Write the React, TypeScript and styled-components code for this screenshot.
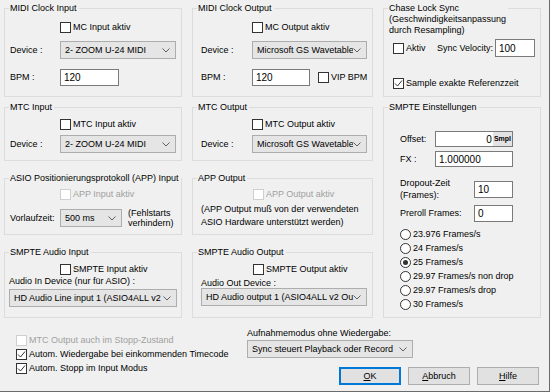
import React from 'react';
import styled, { createGlobalStyle } from 'styled-components';

const Global = createGlobalStyle`
  html, body { margin: 0; padding: 0; background: #f0f0f0; }
  body { font-family: "Liberation Sans", Arial, sans-serif; font-size: 9px; color: #000; }
  * { box-sizing: border-box; }
`;

const Dialog = styled.div`
  width: 550px;
  height: 392px;
  background: #f0f0f0;
  border-right: 1px solid #6b6b6b;
  border-bottom: 1px solid #6b6b6b;
  display: flex;
  flex-direction: column;
  font-family: "Liberation Sans", Arial, sans-serif;
  font-size: 9px;
  line-height: 11px;
  color: #000;
  overflow: hidden;
`;

const MainGrid = styled.div`
  display: grid;
  grid-template-columns: 178px 181px 158px;
  grid-template-rows: 89px 10px 54px 17px 57px 17px 66px;
  column-gap: 10px;
  padding: 8px 0 0 4px;
`;

const Group = styled.div<{ $col: number; $row: string }>`
  grid-column: ${(p) => p.$col};
  grid-row: ${(p) => p.$row};
  position: relative;
  border: 1px solid #dcdcdc;
  display: flex;
  flex-direction: column;
`;

const Legend = styled.div`
  position: absolute;
  top: -6px;
  left: 4px;
  padding: 0 2px 0 1px;
  background: #f0f0f0;
  line-height: 11px;
  white-space: nowrap;
`;

const Row = styled.div<{ $mt?: number; $pl?: number }>`
  display: flex;
  align-items: center;
  margin-top: ${(p) => p.$mt ?? 0}px;
  padding-left: ${(p) => p.$pl ?? 0}px;
  white-space: nowrap;
`;

const Label = styled.span<{ $w: number }>`
  width: ${(p) => p.$w}px;
  flex: none;
`;

const Note = styled.div<{ $mt?: number; $pl?: number; $lh?: number; $ml?: number }>`
  margin-top: ${(p) => p.$mt ?? 0}px;
  margin-left: ${(p) => p.$ml ?? 0}px;
  padding-left: ${(p) => p.$pl ?? 0}px;
  line-height: ${(p) => p.$lh ?? 11}px;
  white-space: nowrap;
`;

const CheckLabel = styled.label<{ $disabled?: boolean; $w?: number }>`
  display: inline-flex;
  align-items: center;
  gap: 2px;
  color: ${(p) => (p.$disabled ? '#a0a0a0' : '#000')};
  width: ${(p) => (p.$w ? `${p.$w}px` : 'auto')};
  flex: none;
  white-space: nowrap;
`;

const CheckBox = styled.span<{ $disabled?: boolean }>`
  width: 11px;
  height: 11px;
  flex: none;
  border: 1px solid ${(p) => (p.$disabled ? '#cfcfcf' : '#333333')};
  background: #fff;
  display: inline-flex;
  align-items: center;
  justify-content: center;
`;

const RadioCircle = styled.span`
  width: 11px;
  height: 11px;
  flex: none;
  border: 1px solid #333;
  border-radius: 50%;
  background: #fff;
  display: inline-flex;
  align-items: center;
  justify-content: center;
`;

const RadioDot = styled.span`
  width: 5px;
  height: 5px;
  border-radius: 50%;
  background: #333;
`;

const RadioRow = styled.label`
  display: flex;
  align-items: center;
  gap: 2px;
  height: 14px;
  white-space: nowrap;
`;

const RadioList = styled.div<{ $mt: number; $pl: number }>`
  display: flex;
  flex-direction: column;
  margin-top: ${(p) => p.$mt}px;
  padding-left: ${(p) => p.$pl}px;
`;

const ComboBox = styled.div<{ $w: number; $ml?: number }>`
  width: ${(p) => p.$w}px;
  height: 18px;
  margin-left: ${(p) => p.$ml ?? 0}px;
  flex: none;
  border: 1px solid #adadad;
  background: #e5e5e5;
  display: flex;
  align-items: center;
  padding-left: 4px;
  padding-right: 5px;
`;

const ComboText = styled.span`
  flex: 1;
  min-width: 0;
  overflow: hidden;
  white-space: nowrap;
`;

const Input = styled.div<{ $w: number; $h?: number; $right?: boolean }>`
  width: ${(p) => p.$w}px;
  height: ${(p) => p.$h ?? 17}px;
  flex: none;
  border: 1px solid #7a7a7a;
  background: #fff;
  display: flex;
  align-items: center;
  justify-content: ${(p) => (p.$right ? 'flex-end' : 'flex-start')};
  padding-left: 3px;
  font-size: 10px;
`;

const Unit = styled.span`
  height: 14px;
  margin-left: 1px;
  padding: 0 1px;
  background: #e3e3e3;
  font-size: 7px;
  font-weight: bold;
  line-height: 14px;
`;

const Bottom = styled.div`
  display: grid;
  grid-template-columns: 247px 1fr;
`;

const BottomChecks = styled.div`
  display: flex;
  flex-direction: column;
  padding: 15px 0 0 16px;
`;

const CheckLine = styled.div`
  height: 14px;
  display: flex;
  align-items: center;
`;

const BottomRight = styled.div`
  display: flex;
  flex-direction: column;
  padding: 10px 10px 0 0;
`;

const Buttons = styled.div`
  display: flex;
  justify-content: flex-end;
  gap: 7px;
  margin-top: 9px;
`;

const Button = styled.button<{ $default?: boolean }>`
  width: 62px;
  height: 18px;
  padding: 0;
  background: #e1e1e1;
  border: 1px solid ${(p) => (p.$default ? '#0078d7' : '#adadad')};
  box-shadow: ${(p) => (p.$default ? 'inset 0 0 0 1px #0078d7' : 'none')};
  font-family: "Liberation Sans", Arial, sans-serif;
  font-size: 9px;
  color: #000;
`;

function Chevron() {
  return (
    <svg width="8" height="5" viewBox="0 0 8 5" style={{ flex: 'none' }}>
      <polyline points="0.5,0.5 4,4 7.5,0.5" fill="none" stroke="#606060" strokeWidth="1" />
    </svg>
  );
}

function Combo({ text, w, ml }: { text: string; w: number; ml?: number }) {
  return (
    <ComboBox $w={w} $ml={ml}>
      <ComboText>{text}</ComboText>
      <Chevron />
    </ComboBox>
  );
}

function Check({ label, checked, disabled, w }: { label: string; checked?: boolean; disabled?: boolean; w?: number }) {
  return (
    <CheckLabel $disabled={disabled} $w={w}>
      <CheckBox $disabled={disabled}>
        {checked && (
          <svg width="9" height="9" viewBox="0 0 9 9">
            <polyline points="1,4.5 3.5,7 8,1.5" fill="none" stroke="#333" strokeWidth="1" />
          </svg>
        )}
      </CheckBox>
      {label}
    </CheckLabel>
  );
}

function Radio({ label, checked }: { label: string; checked?: boolean }) {
  return (
    <RadioRow>
      <RadioCircle>{checked && <RadioDot />}</RadioCircle>
      {label}
    </RadioRow>
  );
}

const frames = [
  '23.976 Frames/s',
  '24 Frames/s',
  '25 Frames/s',
  '29.97 Frames/s non drop',
  '29.97 Frames/s drop',
  '30 Frames/s',
];

export default function App() {
  return (
    <>
      <Global />
      <Dialog>
        <MainGrid>
          <Group $col={1} $row="1">
            <Legend>MIDI Clock Input</Legend>
            <Row $mt={13} $pl={55}>
              <Check label="MC Input aktiv" />
            </Row>
            <Row $mt={8} $pl={5}>
              <Label $w={50}>Device :</Label>
              <Combo text="2- ZOOM U-24 MIDI" w={116} />
            </Row>
            <Row $mt={10} $pl={5}>
              <Label $w={50}>BPM :</Label>
              <Input $w={59}>120</Input>
            </Row>
          </Group>

          <Group $col={1} $row="3">
            <Legend>MTC Input</Legend>
            <Row $mt={11} $pl={55}>
              <Check label="MTC Input aktiv" />
            </Row>
            <Row $mt={5} $pl={5}>
              <Label $w={50}>Device :</Label>
              <Combo text="2- ZOOM U-24 MIDI" w={116} />
            </Row>
          </Group>

          <Group $col={1} $row="5">
            <Legend>ASIO Positionierungsprotokoll (APP) Input</Legend>
            <Row $mt={10} $pl={55}>
              <Check label="APP Input aktiv" disabled />
            </Row>
            <Row $mt={8} $pl={5}>
              <Label $w={50}>Vorlaufzeit:</Label>
              <Combo text="500 ms" w={62} />
              <Note $ml={6} $lh={10}>
                (Fehlstarts
                <br />
                verhindern)
              </Note>
            </Row>
          </Group>

          <Group $col={1} $row="7">
            <Legend>SMPTE Audio Input</Legend>
            <Row $mt={11} $pl={55}>
              <Check label="SMPTE Input aktiv" />
            </Row>
            <Note $mt={1} $pl={4}>Audio In Device (nur für ASIO) :</Note>
            <Row $mt={2}>
              <Combo text="HD Audio Line input 1 (ASIO4ALL v2 Output)" w={168} ml={4} />
            </Row>
          </Group>

          <Group $col={2} $row="1">
            <Legend>MIDI Clock Output</Legend>
            <Row $mt={13} $pl={59}>
              <Check label="MC Output aktiv" />
            </Row>
            <Row $mt={8} $pl={8}>
              <Label $w={51}>Device :</Label>
              <Combo text="Microsoft GS Wavetable Synth" w={115} />
            </Row>
            <Row $mt={10} $pl={8}>
              <Label $w={51}>BPM :</Label>
              <Input $w={58}>120</Input>
              <Row $pl={8}>
                <Check label="VIP BPM" />
              </Row>
            </Row>
          </Group>

          <Group $col={2} $row="3">
            <Legend>MTC Output</Legend>
            <Row $mt={11} $pl={59}>
              <Check label="MTC Output aktiv" />
            </Row>
            <Row $mt={5} $pl={8}>
              <Label $w={51}>Device :</Label>
              <Combo text="Microsoft GS Wavetable Synth" w={115} />
            </Row>
          </Group>

          <Group $col={2} $row="5">
            <Legend>APP Output</Legend>
            <Row $mt={10} $pl={60}>
              <Check label="APP Output aktiv" disabled />
            </Row>
            <Note $mt={3} $pl={8} $lh={13}>
              (APP Output muß von der verwendeten
              <br />
              ASIO Hardware unterstützt werden)
            </Note>
          </Group>

          <Group $col={2} $row="7">
            <Legend>SMPTE Audio Output</Legend>
            <Row $mt={11} $pl={60}>
              <Check label="SMPTE Output aktiv" />
            </Row>
            <Note $mt={3} $pl={8} $lh={10}>Audio Out Device :</Note>
            <Row $mt={0}>
              <Combo text="HD Audio output 1 (ASIO4ALL v2 Output)" w={166} ml={8} />
            </Row>
          </Group>

          <Group $col={3} $row="1">
            <Legend>
              Chase Lock Sync
              <br />
              (Geschwindigkeitsanpassung
              <br />
              durch Resampling)
            </Legend>
            <Row $mt={30} $pl={9}>
              <Check label="Aktiv" w={44} />
              <Label $w={58}>Sync Velocity:</Label>
              <Input $w={40} $h={18}>100</Input>
            </Row>
            <Row $mt={21} $pl={9}>
              <Check label="Sample exakte Referenzzeit" checked />
            </Row>
          </Group>

          <Group $col={3} $row="3 / 8">
            <Legend>SMPTE Einstellungen</Legend>
            <Row $mt={23} $pl={16}>
              <Label $w={35}>Offset:</Label>
              <Input $w={78} $h={16} $right>
                0<Unit>Smpl</Unit>
              </Input>
            </Row>
            <Row $mt={4} $pl={16}>
              <Label $w={35}>FX :</Label>
              <Input $w={78} $h={16}>1.000000</Input>
            </Row>
            <Row $mt={10} $pl={16}>
              <Label $w={74}>
                <Note $lh={12}>
                  Dropout-Zeit
                  <br />
                  (Frames):
                </Note>
              </Label>
              <Input $w={39}>10</Input>
            </Row>
            <Row $mt={4} $pl={16}>
              <Label $w={74}>Preroll Frames:</Label>
              <Input $w={39}>0</Input>
            </Row>
            <RadioList $mt={5} $pl={16}>
              {frames.map((f) => (
                <Radio key={f} label={f} checked={f === '25 Frames/s'} />
              ))}
            </RadioList>
          </Group>
        </MainGrid>

        <Bottom>
          <BottomChecks>
            <CheckLine>
              <Check label="MTC Output auch im Stopp-Zustand" disabled />
            </CheckLine>
            <CheckLine>
              <Check label="Autom. Wiedergabe bei einkommenden Timecode" checked />
            </CheckLine>
            <CheckLine>
              <Check label="Autom. Stopp im Input Modus" checked />
            </CheckLine>
          </BottomChecks>
          <BottomRight>
            <Note>Aufnahmemodus ohne Wiedergabe:</Note>
            <Row $mt={1}>
              <Combo text="Sync steuert Playback oder Record" w={166} />
            </Row>
            <Buttons>
              <Button $default>
                <u>O</u>K
              </Button>
              <Button>
                <u>A</u>bbruch
              </Button>
              <Button>
                <u>H</u>ilfe
              </Button>
            </Buttons>
          </BottomRight>
        </Bottom>
      </Dialog>
    </>
  );
}
